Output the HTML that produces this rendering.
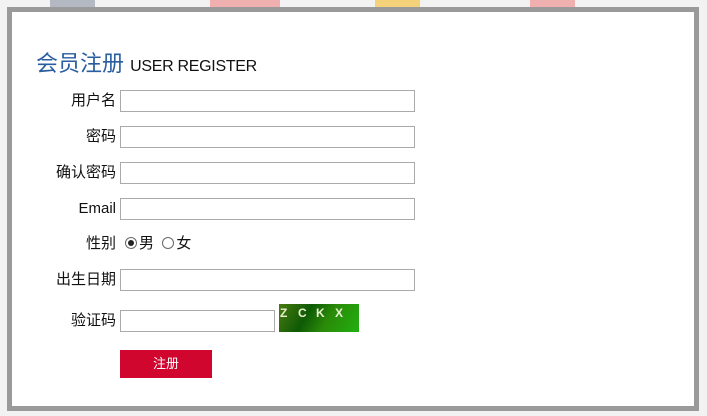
<!DOCTYPE html>
<html><head><meta charset="utf-8"><style>
body{margin:0;width:707px;height:416px;background:#f2f2f2;position:relative;overflow:hidden;font-family:"Liberation Sans","Noto Sans CJK SC",sans-serif;color:#111}
.bg{position:absolute;top:0;height:8px}
.box{position:absolute;left:7px;top:7px;width:682px;height:394px;border:5px solid #9a9a9a;background:#fff}
.t{position:absolute;left:36px;top:46px;font-size:22px;color:#2a5d9f;white-space:nowrap}
.t span{font-size:16px;color:#111;letter-spacing:-0.3px}
.l{position:absolute;width:116px;text-align:right;font-size:15px;line-height:21px;left:0}
.i{position:absolute;left:120px;width:295px;border:1px solid #aaa;box-sizing:border-box;height:22px}
.r{display:inline-block;width:10px;height:10px;border:1px solid #666;border-radius:50%;vertical-align:-1px;position:relative;margin-right:2px}
.r.on::after{content:"";position:absolute;left:2px;top:2px;width:6px;height:6px;border-radius:50%;background:#222}
</style></head><body>
<div class="bg" style="left:50px;width:45px;background:#b3b8c3"></div>
<div class="bg" style="left:210px;width:70px;background:#f0b0b0"></div>
<div class="bg" style="left:375px;width:45px;background:#f3d27a"></div>
<div class="bg" style="left:530px;width:45px;background:#f0b0b0"></div>
<div class="box"></div>
<div class="t">会员注册 <span>USER REGISTER</span></div>
<div class="l" style="top:90px">用户名</div><div class="i" style="top:90px"></div>
<div class="l" style="top:126px">密码</div><div class="i" style="top:126px"></div>
<div class="l" style="top:162px">确认密码</div><div class="i" style="top:162px"></div>
<div class="l" style="top:198px">Email</div><div class="i" style="top:198px"></div>
<div class="l" style="top:233px">性别</div>
<div style="position:absolute;left:125px;top:233px;font-size:15px;line-height:21px"><span class="r on"></span>男 &nbsp;<span class="r"></span>女</div>
<div class="l" style="top:269px">出生日期</div><div class="i" style="top:269px"></div>
<div class="l" style="top:310px">验证码</div><div class="i" style="top:310px;width:155px"></div>
<div style="position:absolute;left:279px;top:304px;width:80px;height:28px;background:linear-gradient(120deg,#4a7a10 0%,#0d5a05 35%,#2a8a08 60%,#22b010 100%);color:#e8f0d0;font-size:12px;font-weight:bold;line-height:18px;white-space:nowrap;overflow:hidden"><span style="position:absolute;left:1px">Z</span><span style="position:absolute;left:19px">C</span><span style="position:absolute;left:37px">K</span><span style="position:absolute;left:56px">X</span></div>
<div style="position:absolute;left:120px;top:350px;width:92px;height:28px;background:#d0062f;color:#fff;font-size:13px;text-align:center;line-height:28px">注册</div>
</body></html>
